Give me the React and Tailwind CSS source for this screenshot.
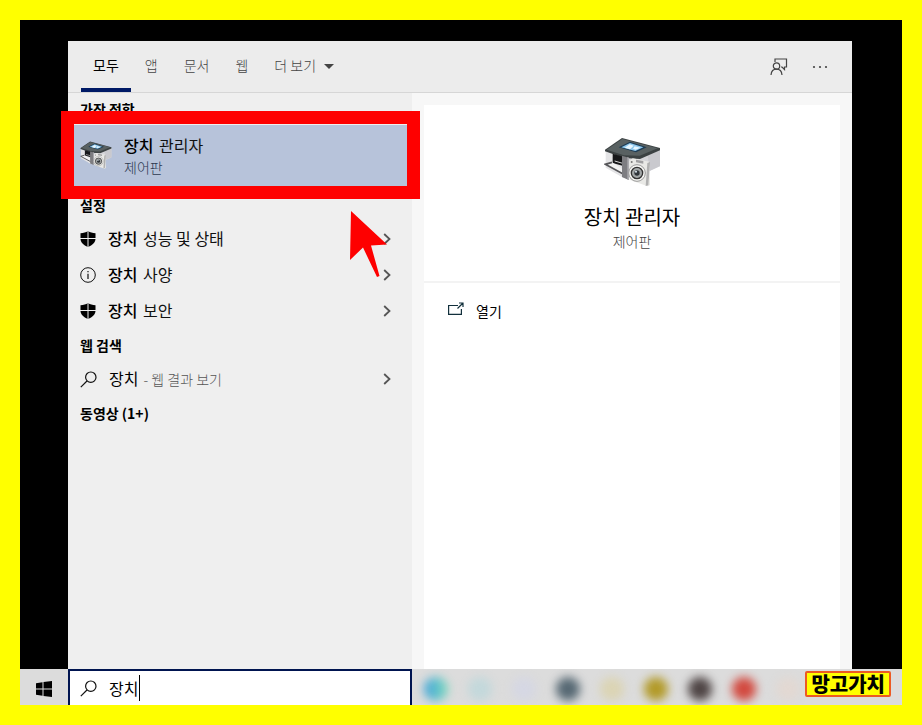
const tabs = ["앱", "문서", "웹"];

const settings = [
  { icon: "shield", rest: "성능 및 상태" },
  { icon: "info", rest: "사양" },
  { icon: "shield", rest: "보안" },
];

const blurredApps = [
  "bg-linear-to-r from-[#3f9fdc] to-[#7fdcb8]",
  "bg-[#c3d8db]",
  "bg-[#d5d7e3]",
  "bg-[#566873]",
  "bg-[#dbd4b4]",
  "bg-[#b29a28]",
  "bg-[#4e4444]",
  "bg-[#d2493f]",
  "bg-[#e2d8d2]",
];

function ShieldIcon() {
  return (
    <svg viewBox="0 0 16 16" className="h-4 w-4 shrink-0" aria-hidden="true">
      <path
        d="M8 0c2 1.400 4.500 2.200 7.500 2.200V7.500c0 4-3 6.800-7.500 8.500C3.500 14.300.5 11.500.5 7.500V2.200C3.500 2.200 6 1.400 8 0z"
        fill="#000"
      />
      <path d="M8 0v16M0 7.500h16" stroke="#efefef" strokeWidth="1" />
    </svg>
  );
}

function InfoIcon() {
  return (
    <svg viewBox="0 0 16 16" className="h-4 w-4 shrink-0" aria-hidden="true">
      <circle cx="8" cy="8" r="7.300" fill="none" stroke="#111" />
      <path d="M8 4v1.300M8 6.700V12" stroke="#111" strokeWidth="1.200" />
    </svg>
  );
}

function SearchIcon() {
  return (
    <svg
      viewBox="0 0 17 17"
      className="h-[17px] w-[17px] shrink-0"
      fill="none"
      stroke="#111"
      strokeWidth="1.200"
      aria-hidden="true"
    >
      <circle cx="10.800" cy="6.200" r="5.200" />
      <path d="M7 10 .8 16.200" />
    </svg>
  );
}

function Chevron() {
  return (
    <svg viewBox="0 0 8 12" className="h-3 w-2 shrink-0" aria-hidden="true">
      <path d="M1.200 1 6.500 6l-5.300 5" fill="none" stroke="#555" strokeWidth="1.800" />
    </svg>
  );
}

function DeviceIcon({ className }) {
  return (
    <svg viewBox="0 0 171 150" className={className} aria-hidden="true">
      <path d="M5 42 60 64v60L5 92z" fill="#e4e4e6" />
      <path d="m60 64 108-26v50l-40 18-68 14z" fill="#d5d5d9" />
      <path d="m130 50 38-11v48l-30 14z" fill="#c9c9ce" />
      <path d="M3 38 54 3l114 30v7l-60 26-48-3L3 43z" fill="#3c4243" />
      <path d="M8 38 55 6l106 28-54 22-47-1z" fill="#596162" />
      <path d="m44 31 34-17 50 17-32 15z" fill="#1d3c55" />
      <path d="m52 31 26-13 40 13-24 11z" fill="#8fc9ee" />
      <path d="m62 32 15-10 12 4-11 11zM92 28l17 4-14 6-8-3z" fill="#e8f6fe" />
      <path d="m26 50 32 9v28l-32-9z" fill="#17181a" />
      <path d="m32 72 24 7" stroke="#d8d8d8" strokeWidth="3" />
      <path
        d="M24 76 4 82l52 28 8-8"
        fill="#f2f2f2"
        stroke="#565659"
        strokeWidth="5"
      />
      <path d="m54 56 20 6v67l-20-9z" fill="#7d7d81" />
      <path d="m70 60 5 2v67l-5-2z" fill="#aaaaae" />
      <path d="m76 72 10-8 50 10 2 70-7 4-55-20z" fill="#e9e9e6" />
      <path d="m130 78 8-3-5 70-8 2z" fill="#b0b0b0" />
      <path d="m96 68 22 4v8l-22-4z" fill="#a0a0a2" />
      <circle cx="83" cy="75" r="3" fill="#777" />
      <circle cx="99" cy="108" r="25" fill="#f5f5f2" stroke="#9a9a9a" strokeWidth="3" />
      <circle cx="99" cy="108" r="17" fill="#a2a6a6" stroke="#333" strokeWidth="4" />
      <circle cx="99" cy="108" r="8" fill="#30353a" />
      <circle cx="96" cy="104" r="3" fill="#dce8ef" />
    </svg>
  );
}

function SectionTitle({ children }) {
  return (
    <h2 className="flex h-8 items-center px-3 text-sm font-bold text-black">
      {children}
    </h2>
  );
}

function ResultRow({ icon, children }) {
  return (
    <button
      type="button"
      className="flex h-9 w-full items-center gap-3 pr-[21px] pl-3 text-left text-base text-[#111]"
    >
      {icon}
      <span className="flex-1 pb-0.5">{children}</span>
      <Chevron />
    </button>
  );
}

function TopBar() {
  return (
    <header className="flex h-[52px] items-center justify-between border-b border-[#d6d6d6] bg-[#ececec] pr-6 pl-[13px] text-sm text-[#444]">
      <nav className="flex h-full gap-0.5">
        <button
          type="button"
          className="border-b-4 border-[#001a66] px-3 text-black"
        >
          모두
        </button>
        {tabs.map((tab) => (
          <button
            key={tab}
            type="button"
            className="border-b-4 border-transparent px-3 font-light"
          >
            {tab}
          </button>
        ))}
        <button
          type="button"
          className="flex items-center gap-2 border-b-4 border-transparent pl-3 font-light"
        >
          더 보기
          <svg viewBox="0 0 10 5" className="mt-1 h-[5px] w-2.5" aria-hidden="true">
            <path d="M0 0h10L5 5z" fill="#444" />
          </svg>
        </button>
      </nav>
      <div className="flex items-center gap-6">
        <button type="button" aria-label="피드백">
          <svg
            viewBox="0 0 18 18"
            className="h-[18px] w-[18px]"
            fill="none"
            stroke="#444"
            strokeWidth="1.200"
          >
            <path d="M5 4V1h11.500v8h-2v2.500L12 9h-1" />
            <circle cx="6.500" cy="8" r="3.200" />
            <path d="M1 17c.3-3.700 2.500-5.800 5.500-5.800S11.700 13.300 12 17" />
          </svg>
        </button>
        <button type="button" aria-label="옵션">
          <svg viewBox="0 0 16 4" className="h-1 w-4" fill="#444">
            <circle cx="2" cy="2" r="1.100" />
            <circle cx="8" cy="2" r="1.100" />
            <circle cx="14" cy="2" r="1.100" />
          </svg>
        </button>
      </div>
    </header>
  );
}

function ResultList() {
  return (
    <section className="w-[344px] shrink-0 bg-[#efefef]">
      <SectionTitle>가장 적합</SectionTitle>
      <div className="relative">
        <button
          type="button"
          className="flex h-16 w-full items-center gap-3 bg-[#b7c3da] px-3 pb-1 text-left"
        >
          <DeviceIcon className="h-8 w-8 shrink-0" />
          <span className="flex flex-col">
            <span className="text-base text-[#111]">
              <b className="mr-0.5 font-medium text-black">장치</b> 관리자
            </span>
            <span className="text-sm font-light text-[#2c3850]">제어판</span>
          </span>
        </button>
        <div className="pointer-events-none absolute -top-3.5 -right-2 -left-[7px] h-[88px] border-[13px] border-[#fe0000]" />
        <svg
          viewBox="0 0 38 68"
          className="pointer-events-none absolute top-[86px] right-6 z-10 h-[68px] w-[38px]"
          aria-hidden="true"
        >
          <path d="M1 0 37 33.500l-16 1L29.500 65l-2.500 1-14-29.500L0 49z" fill="#fe0000" />
        </svg>
      </div>
      <SectionTitle>설정</SectionTitle>
      {settings.map((item) => (
        <ResultRow
          key={item.rest}
          icon={item.icon === "shield" ? <ShieldIcon /> : <InfoIcon />}
        >
          <b className="mr-0.5 font-medium text-black">장치</b> {item.rest}
        </ResultRow>
      ))}
      <SectionTitle>웹 검색</SectionTitle>
      <ResultRow icon={<SearchIcon />}>
        <span className="mr-0.5 text-black">장치</span>
        <span className="text-sm font-light text-[#555]"> - 웹 결과 보기</span>
      </ResultRow>
      <SectionTitle>동영상 (1+)</SectionTitle>
    </section>
  );
}

function DetailPane() {
  return (
    <section className="flex flex-1 flex-col bg-[#f7f7f7] px-3 pt-3">
      <div className="flex-1 bg-white">
        <div className="flex h-[178px] flex-col items-center border-b-2 border-[#f3f3f3] pt-8">
          <DeviceIcon className="h-[50px] w-[57px]" />
          <h1 className="mt-4 text-xl text-black">장치 관리자</h1>
          <p className="text-sm font-light text-[#444]">제어판</p>
        </div>
        <button
          type="button"
          className="mt-[18px] flex items-center gap-3 px-6 text-sm text-black"
        >
          <svg
            viewBox="0 0 16 14"
            className="mb-1 h-3.5 w-4"
            fill="none"
            stroke="#12303c"
            strokeWidth="1.200"
            aria-hidden="true"
          >
            <path d="M10 3.500H.6v8.900h12.800V7M9.500 6.500l5-5M11 1h4v4" />
          </svg>
          열기
        </button>
      </div>
    </section>
  );
}

function Taskbar() {
  return (
    <footer className="flex h-9 bg-[#dcdcdc]">
      <button
        type="button"
        aria-label="시작"
        className="flex w-12 items-center justify-center pt-1"
      >
        <svg viewBox="0 0 16 16" className="h-4 w-4" fill="#000">
          <path d="m0 2.200 6.500-.9v6.200H0zM7.500 1.100 16 0v7.500H7.500zM0 8.500h6.500v6.200L0 13.800zM7.500 8.500H16V16l-8.500-1.100z" />
        </svg>
      </button>
      <label className="flex w-[344px] items-center gap-3 border-2 border-b-0 border-[#001450] bg-white pl-2.5">
        <SearchIcon />
        <span className="flex flex-1 items-center">
          <input
            type="text"
            aria-label="검색"
            defaultValue="장치"
            className="w-[30px] text-base text-black outline-none"
          />
          <span className="h-[26px] w-px bg-black" />
        </span>
      </label>
      <div className="flex flex-1 items-center gap-5 overflow-hidden pt-1 pl-3">
        {blurredApps.map((color) => (
          <span
            key={color}
            className={`h-6 w-6 shrink-0 rounded-full blur-[5px] ${color}`}
          />
        ))}
      </div>
      <strong className="mt-0.5 mr-[11px] flex h-[26px] shrink-0 items-center rounded-xs border-2 border-[#ec5a24] bg-[#ffff00] px-1 text-xl leading-5 font-black text-black">
        망고가치
      </strong>
    </footer>
  );
}

export default function App() {
  return (
    <div className="flex min-h-screen flex-col border-20 border-[#ffff00] bg-black font-['Noto_Sans_CJK_KR','Noto_Sans',sans-serif]">
      <main className="flex flex-1 flex-col pt-[21px] pr-[50px] pl-12">
        <TopBar />
        <div className="flex flex-1">
          <ResultList />
          <DetailPane />
        </div>
      </main>
      <Taskbar />
    </div>
  );
}
